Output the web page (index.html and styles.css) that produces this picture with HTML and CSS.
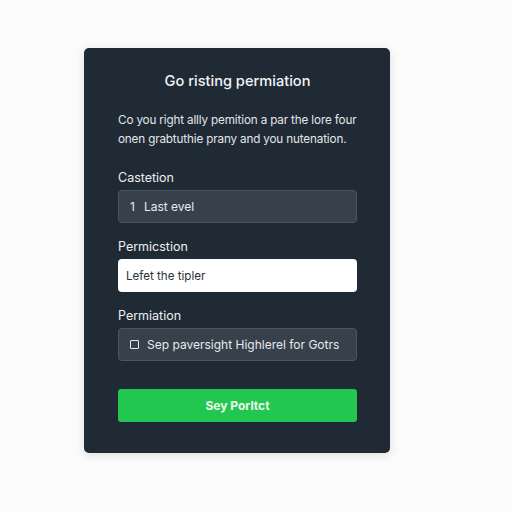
FILE: index.html
```html
<!DOCTYPE html>
<html>
<head>
<meta charset="utf-8">
<link rel="stylesheet" href="styles.css">
</head>
<body>
<div class="page">
  <div class="card">
    <h1 class="title">Go risting permiation</h1>
    <p class="desc">Co you right allly pemition a par the lore four<br>onen grabtuthie prany and you nutenation.</p>
    <div class="field">
      <div class="label">Castetion</div>
      <div class="input dark"><span class="num">1</span>Last evel</div>
    </div>
    <div class="field">
      <div class="label">Permicstion</div>
      <div class="input light">Lefet the tipler</div>
    </div>
    <div class="field">
      <div class="label">Permiation</div>
      <div class="input dark"><span class="check"></span>Sep paversight Highlerel for Gotrs</div>
    </div>
    <button class="btn">Sey Porltct</button>
  </div>
</div>
</body>
</html>
```
FILE: styles.css
```css
* { box-sizing: border-box; }
html, body { margin: 0; padding: 0; }
body {
  width: 512px;
  height: 512px;
  background: #fbfbfb;
  font-family: "Inter", "Noto Sans", sans-serif;
}
.page {
  padding: 48px 0 0 84px;
}
.card {
  width: 306px;
  height: 405px;
  background: #1f2a35;
  border-radius: 5px;
  box-shadow: 0 2px 10px rgba(0,0,0,0.12);
  padding: 23px 33px 0 34px;
  display: flex;
  flex-direction: column;
}
.title {
  margin: 0;
  font-size: 14.6px;
  font-weight: 500;
  color: #f2f4f5;
  text-align: center;
  line-height: 20px;
}
.desc {
  margin: 20px 0 0 0;
  font-size: 11.7px;
  line-height: 19px;
  color: #e3e6e8;
  letter-spacing: -0.15px;
  white-space: nowrap;
}
.field {
  display: flex;
  flex-direction: column;
}
.field:first-of-type { margin-top: 21px; }
.field + .field { margin-top: 16px; }
.label {
  font-size: 12.5px;
  line-height: 16px;
  color: #eef0f2;
  margin-bottom: 4px;
}
.input {
  height: 33px;
  border-radius: 4px;
  display: flex;
  align-items: center;
  font-size: 12px;
}
.input.dark {
  background: #36414b;
  border: 1px solid #4b565f;
  color: #e7eaec;
  padding-left: 11px;
}
.input.light {
  background: #ffffff;
  color: #2a3138;
  padding-left: 8px;
  font-size: 11.6px;
}
.num {
  margin-right: 9px;
}
.check {
  width: 9px;
  height: 9px;
  border: 1.5px solid #e7eaec;
  border-radius: 1px;
  margin-right: 8px;
}
.btn {
  margin-top: 28px;
  height: 33px;
  border: none;
  border-radius: 3px;
  background: #22c74f;
  color: #eef7ef;
  font-family: "Inter", "Noto Sans", sans-serif;
  font-size: 12px;
  font-weight: 700;
  cursor: pointer;
}
```
